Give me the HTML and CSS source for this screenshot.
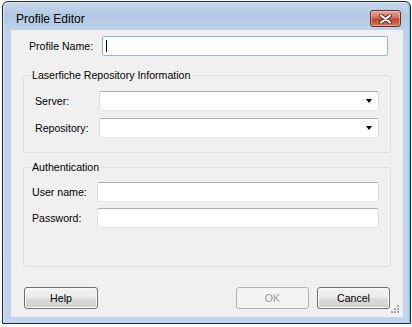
FILE: index.html
```html
<html>
	<head>
		<link rel="stylesheet" href="styles.css">
	</head>
	<body>
		<div class="window">
			<div class="titlebar">
				<span class="title">Profile Editor</span>
				<div class="close-btn">
					<svg width="13" height="10" viewBox="0 0 13 10">
						<path d="M2 1.5 L11 8.5 M11 1.5 L2 8.5" stroke="#5a2a24" stroke-width="4" stroke-linecap="round"/>
						<path d="M2 1.5 L11 8.5 M11 1.5 L2 8.5" stroke="#ffffff" stroke-width="2.2" stroke-linecap="round"/>
					</svg>
				</div>
			</div>
			<div class="client">
				<div class="profile-row">
					<label>Profile Name:</label>
					<div class="textbox focused"><span class="caret"></span></div>
				</div>

				<fieldset class="group repo-group">
					<legend>Laserfiche Repository Information</legend>
					<div class="form-grid repo-grid">
						<label>Server:</label>
						<div class="textbox combo"><span class="arrow"></span></div>
						<label>Repository:</label>
						<div class="textbox combo"><span class="arrow"></span></div>
					</div>
				</fieldset>

				<fieldset class="group auth-group">
					<legend>Authentication</legend>
					<div class="form-grid auth-grid">
						<label>User name:</label>
						<div class="textbox"></div>
						<label>Password:</label>
						<div class="textbox"></div>
					</div>
				</fieldset>

				<div class="buttons">
					<div class="btn help-btn">Help</div>
					<div class="btn-group">
						<div class="btn disabled">OK</div>
						<div class="btn">Cancel</div>
					</div>
				</div>

				<svg class="grip" width="9" height="9" viewBox="0 0 9 9">
					<rect x="6" y="0" width="2" height="2" fill="#a8a8a8"/>
					<rect x="3" y="3" width="2" height="2" fill="#a8a8a8"/>
					<rect x="6" y="3" width="2" height="2" fill="#a8a8a8"/>
					<rect x="0" y="6" width="2" height="2" fill="#a8a8a8"/>
					<rect x="3" y="6" width="2" height="2" fill="#a8a8a8"/>
					<rect x="6" y="6" width="2" height="2" fill="#a8a8a8"/>
				</svg>
			</div>
		</div>
	</body>
</html>
```

FILE: styles.css
```css
body{
	margin:0;
	background:#ffffff;
	font-family:"Liberation Sans", Arial, sans-serif;
	font-size:10.6px;
	color:#000000;
}

.window{
	box-sizing:border-box;
	margin:1px 0 0 2px;
	width:409px;
	height:323px;
	border:1px solid #1e2a36;
	border-radius:6px 6px 0 0;
	background:linear-gradient(#c5d6ea 0px, #b3c9e2 14px, #bdd3ea 28px, #c0d5ec 100%);
	box-shadow:inset -1px 0 0 #5fc8ee, inset 1px 1px 0 #dde8f4;
	padding:0 7px 6px 8px;
	display:flex;
	flex-direction:column;
}

.titlebar{
	height:28px;
	flex:none;
	display:flex;
	justify-content:space-between;
	align-items:flex-start;
}

.title{
	font-size:12px;
	margin:10px 0 0 5px;
	line-height:14px;
}

.close-btn{
	box-sizing:border-box;
	width:31px;
	height:17px;
	margin:8px 2px 0 0;
	border:1px solid #6e2a22;
	border-radius:3px;
	background:linear-gradient(#e8a493 0%, #d2715e 45%, #c2442c 55%, #d2765a 100%);
	box-shadow:inset 0 0 0 1px rgba(255,255,255,0.35);
	display:flex;
	align-items:center;
	justify-content:center;
}

.client{
	flex:1;
	position:relative;
	background:#f0f0f0;
	display:flex;
	flex-direction:column;
}

.profile-row{
	margin:6px 15px 0 18px;
	display:grid;
	grid-template-columns:73px 1fr;
	align-items:center;
}

.textbox{
	box-sizing:border-box;
	height:20px;
	background:#ffffff;
	border:1px solid #dbdfe6;
	border-top-color:#abadb3;
	border-bottom-color:#e3e9ef;
	border-radius:2px;
	position:relative;
}

.textbox.focused{
	border-color:#8db6e0;
}

.caret{
	display:block;
	width:1px;
	height:12px;
	margin:3px 0 0 3px;
	background:#000000;
}

.combo .arrow{
	position:absolute;
	right:6px;
	top:7px;
	width:0;
	height:0;
	border-left:3.5px solid transparent;
	border-right:3.5px solid transparent;
	border-top:4px solid #000000;
}

.group{
	margin:0 12px;
	border:1px solid #d5dfe5;
	border-radius:3px;
	padding:0 11px 14px 8px;
}

.group legend{
	padding:0 2px 0 0;
	line-height:13px;
}

.repo-group{
	margin-top:13px;
	padding-top:9px;
}

.auth-group{
	margin-top:8px;
	padding-top:8px;
	padding-bottom:38px;
}

.form-grid{
	display:grid;
	align-items:center;
}

.repo-grid{
	grid-template-columns:67px 1fr;
	row-gap:7px;
}

.repo-grid label{
	padding-left:3px;
}

.auth-grid{
	grid-template-columns:65px 1fr;
	row-gap:6px;
}

.buttons{
	margin-top:20px;
	padding:0 13px;
	display:flex;
	justify-content:space-between;
}

.btn-group{
	display:flex;
	gap:8px;
}

.btn{
	box-sizing:border-box;
	width:73px;
	height:22px;
	border:1px solid #707070;
	border-radius:3px;
	background:linear-gradient(#f2f2f2 0%, #ebebeb 50%, #dddddd 50%, #cfcfcf 100%);
	box-shadow:inset 0 0 0 1px #fcfcfc;
	display:flex;
	align-items:center;
	justify-content:center;
}

.help-btn{
	width:74px;
}

.btn.disabled{
	border-color:#adb2b5;
	background:#f4f4f4;
	box-shadow:none;
	color:#9a9a9a;
}

.grip{
	position:absolute;
	right:3px;
	bottom:3px;
}
```
